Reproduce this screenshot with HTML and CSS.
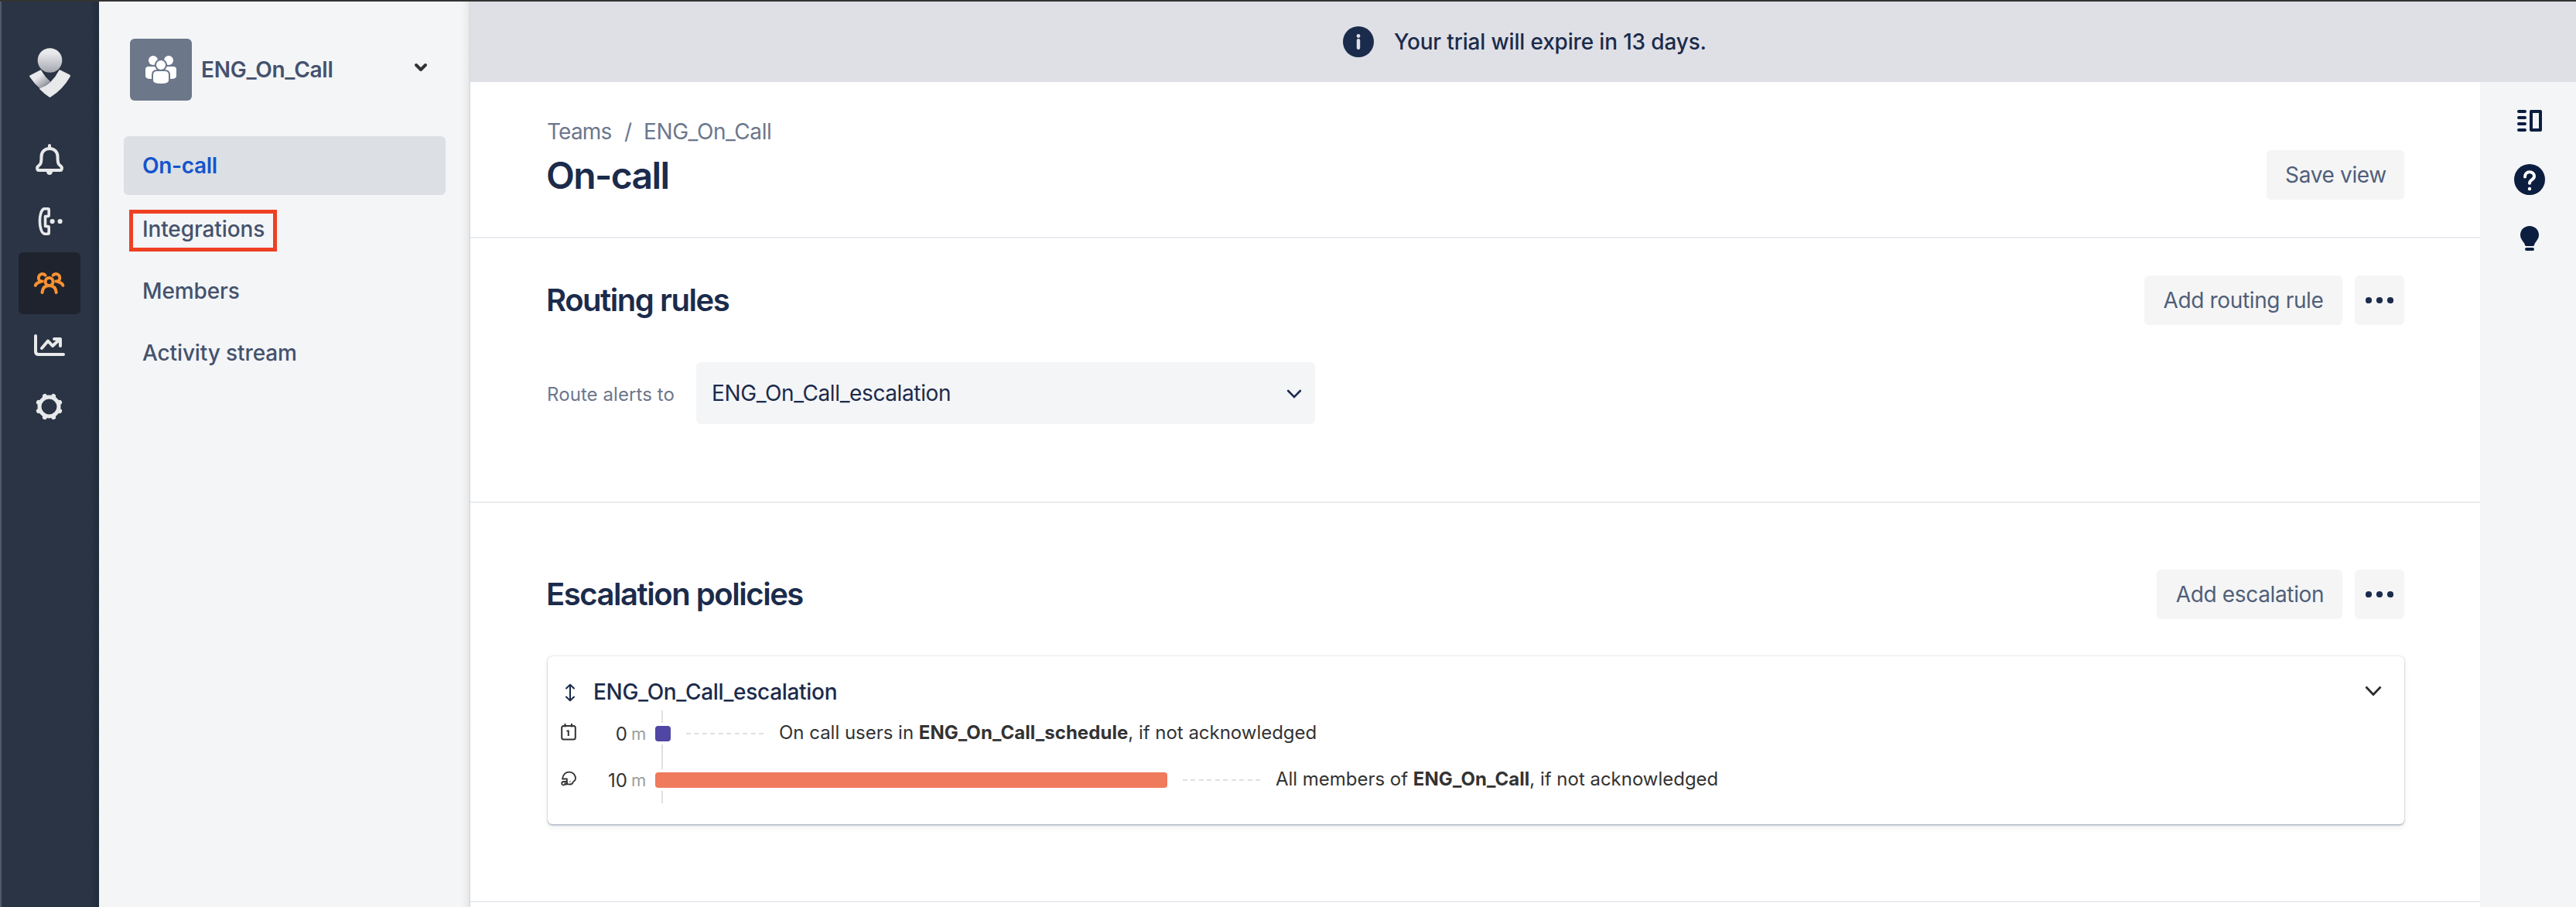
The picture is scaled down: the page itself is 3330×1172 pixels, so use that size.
FILE: index.html
```html
<!DOCTYPE html>
<html lang="en">
<head>
<meta charset="utf-8">
<title>On-call</title>
<link rel="stylesheet" href="styles.css">
</head>
<body>
<div class="app">
  <nav class="rail">
    <a class="rail-logo">
      <svg width="56" height="64" viewBox="0 0 56 64">
        <defs>
          <linearGradient id="head" x1="0" y1="0" x2="0" y2="1"><stop offset="0.2" stop-color="#e8e9eb"/><stop offset="1" stop-color="#a3a7ae"/></linearGradient>
          <linearGradient id="arm" x1="0.2" y1="0.2" x2="0.75" y2="0.85"><stop offset="0.3" stop-color="#e8e9eb"/><stop offset="1" stop-color="#8d929c"/></linearGradient>
        </defs>
        <circle cx="27.500" cy="16" r="15.800" fill="url(#head)"/>
        <path d="M1.600 35.500 14.600 28.700Q16 28.200 16.800 29.600 21 37.500 28.300 43.500L15.500 53.300Q7 46 1.200 37Q.700 36 1.600 35.500Z" fill="url(#arm)"/>
        <path d="M41 28.500 53 34.600Q54.600 35.500 53.700 37 44 54 28.300 63.500 27.500 64 26.700 63.500 20 59 13.700 52.700 30.500 46.500 38.900 29.500 39.700 27.900 41 28.500Z" fill="#e8e9eb"/>
      </svg>
    </a>
    <a class="rail-item">
      <svg width="48" height="48" viewBox="0 0 48 48" fill="none" stroke="#e8e9eb" stroke-width="4" stroke-linecap="round" stroke-linejoin="round">
        <path d="M24 6v3M24 10c-6 0-10.500 4-10.500 10.500C13.500 30 12 31 9 33c-1.500 1.500-1 5 1 5h28c2 0 2.500-3.500 1-5-3-2-4.500-3-4.500-12.500C34.500 14 30 10 24 10Z"/>
        <path d="M20 40h8q-.5 4-4 4t-4-4Z" fill="#e8e9eb" stroke="none"/>
      </svg>
    </a>
    <a class="rail-item">
      <svg width="48" height="48" viewBox="0 0 48 48" fill="none" stroke="#e8e9eb" stroke-width="3.600" stroke-linejoin="round">
        <path d="M17 7.800h5q1.200 0 1.200 1.200v7q0 1.500-1.500 1.500h-3.200v13h3.200q1.500 0 1.500 1.500v7q0 1.200-1.200 1.200h-4.500C9.500 38 9.500 10 17 7.800Z"/>
        <circle cx="27.600" cy="24" r="3.100" fill="#e8e9eb" stroke="none"/><circle cx="37.600" cy="24" r="3.100" fill="#e8e9eb" stroke="none"/>
      </svg>
    </a>
    <a class="rail-item active">
      <svg width="48" height="48" viewBox="0 -4 48 48" fill="none" stroke="#f79232" stroke-width="4" stroke-linecap="round">
        <circle cx="23.600" cy="18" r="5"/>
        <path d="M14.500 32c.5-6 4-9 9.100-9s8.600 3 9.100 9"/>
        <path d="M18.500 9.700a5 5 0 1 0-6 7.800h2.300M12 18.200c-3.500.8-5.300 2-6.200 4.600"/>
        <path d="M28.700 9.700a5 5 0 1 1 6 7.800h-2.300M35.200 18.200c3.500.8 5.300 2 6.200 4.600"/>
      </svg>
    </a>
    <a class="rail-item">
      <svg width="48" height="48" viewBox="0 0 48 48" fill="none" stroke="#e8e9eb" stroke-width="4" stroke-linecap="round" stroke-linejoin="round">
        <path d="M6 12v20q0 4 4 4h32"/>
        <path d="m14 28 8-9.500 6 6.500L37.500 16M30 16h8v9"/>
      </svg>
    </a>
    <a class="rail-item">
      <svg width="48" height="48" viewBox="0 0 48 48" fill="none" stroke="#e8e9eb">
        <circle cx="23.500" cy="23.500" r="12.500" stroke-width="5"/>
        <g stroke-width="6" stroke-linecap="round"><path d="M17.900 9.900l.4.900M29.100 9.900l-.4.900M37.100 17.900l-.9.400M37.100 29.100l-.9-.4M29.100 37.100l-.4-.9M17.900 37.100l.4-.9M9.900 29.100l.9-.4M9.900 17.900l.9.400"/></g>
      </svg>
    </a>
  </nav>

  <aside class="sidebar">
    <div class="team">
      <span class="team-avatar">
        <svg width="44" height="48" viewBox="0 0 44 48" fill="#fff">
          <circle cx="12" cy="12" r="6"/><circle cx="32" cy="12" r="6"/>
          <path d="M6 20h12v16H9q-7 0-7-4v-8q0-4 4-4ZM38 20H26v16h9q7 0 7-4v-8q0-4-4-4Z"/>
          <g stroke="#6c778a" stroke-width="2"><circle cx="22" cy="18" r="7"/><path d="M17 25h10q6 0 6 6v7q0 5-11 5t-11-5v-7q0-6 6-6Z"/></g>
        </svg>
      </span>
      <span class="team-name">ENG_On_Call</span>
      <svg class="team-caret" width="20" height="14" viewBox="0 0 20 14" fill="none" stroke="#333" stroke-width="4" stroke-linecap="round" stroke-linejoin="round"><path d="m4 4 6 6 6-6"/></svg>
    </div>
    <ul class="menu">
      <li class="menu-item selected">On-call</li>
      <li class="menu-item">Integrations<span class="highlight"></span></li>
      <li class="menu-item">Members</li>
      <li class="menu-item">Activity stream</li>
    </ul>
  </aside>

  <div class="content">
    <div class="banner">
      <svg width="40" height="40" viewBox="0 0 40 40"><circle cx="20" cy="20" r="20" fill="#1b2b4b"/><circle cx="20" cy="12.500" r="2.400" fill="#dfe1e6"/><path d="M20 18.300v9.500" stroke="#dfe1e6" stroke-width="4.400" stroke-linecap="round"/></svg>
      <span>Your trial will expire in 13 days.</span>
    </div>
    <div class="columns">
      <main class="page">
        <header class="page-head">
          <div>
            <div class="crumbs"><span class="crumb-root">Teams</span><span class="crumb-sep">/</span><span>ENG_On_Call</span></div>
            <h1>On-call</h1>
          </div>
          <button class="btn save">Save view</button>
        </header>

        <section class="routing">
          <div class="section-head">
            <h2>Routing rules</h2>
            <div class="actions">
              <button class="btn add-rule">Add routing rule</button>
              <button class="btn more"><svg width="36" height="10" viewBox="0 0 36 10" fill="#1b2b4b"><circle cx="4" cy="5" r="4.100"/><circle cx="18" cy="5" r="4.100"/><circle cx="32" cy="5" r="4.100"/></svg></button>
            </div>
          </div>
          <div class="route">
            <label>Route alerts to</label>
            <div class="select">
              <span>ENG_On_Call_escalation</span>
              <svg width="20" height="14" viewBox="0 0 20 14" fill="none" stroke="#1b2b4b" stroke-width="2.600" stroke-linecap="round"><path d="m2.200 4 7.800 8 7.800-8"/></svg>
            </div>
          </div>
        </section>

        <section class="escalation">
          <div class="section-head">
            <h2>Escalation policies</h2>
            <div class="actions">
              <button class="btn add-esc">Add escalation</button>
              <button class="btn more"><svg width="36" height="10" viewBox="0 0 36 10" fill="#1b2b4b"><circle cx="4" cy="5" r="4.100"/><circle cx="18" cy="5" r="4.100"/><circle cx="32" cy="5" r="4.100"/></svg></button>
            </div>
          </div>
          <article class="card">
            <div class="card-head">
              <svg class="drag" width="14" height="24" viewBox="0 0 14 24" fill="none" stroke="#1b2b4b" stroke-width="2" stroke-linecap="round" stroke-linejoin="round"><path d="M7 2v20M2 6.500 7 1.800l5 4.700M2 17.500l5 4.700 5-4.700"/></svg>
              <h3>ENG_On_Call_escalation</h3>
              <svg class="card-caret" width="22" height="16" viewBox="0 0 22 16" fill="none" stroke="#2b2b2b" stroke-width="2.800"><path d="m1.500 2.500 9.500 10 9.500-10"/></svg>
            </div>
            <div class="step">
              <svg class="step-icon" width="20" height="24" viewBox="0 0 20 24" fill="none" stroke="#333" stroke-width="2"><rect x="1.200" y="4" width="17.600" height="17.500" rx="2.500"/><path d="M5.500 1v4.500M14 1v4.500M7.500 10.500h2.300V17"/></svg>
              <span class="step-time">0</span><span class="step-unit">m</span>
              <div class="track track-start"><i class="tick"></i><i class="bar"></i><i class="tick"></i></div>
              <i class="dashes"></i>
              <span class="step-text">On call users in <b>ENG_On_Call_schedule</b>, if not acknowledged</span>
            </div>
            <div class="step">
              <svg class="step-icon" width="20" height="24" viewBox="0 0 20 24" fill="none" stroke="#333" stroke-width="1.800" stroke-linejoin="round"><path d="M2 12.500C2.500 6.500 6.500 3.600 10.500 3.600c6 0 8.500 4.500 8.500 8.200 0 2.700-1.600 3.600-3 4.400-.6 2-1.800 3.300-4 3.300-3.500 0-5.500-.5-7.500.5-1.700 1-3.300.3-3.300-1.500 0-1.800 1-2.500 2.700-2.500h4v-3.500Z"/><path d="M8 16v3M4.500 18.500H8"/><circle cx="12" cy="16" r=".8" fill="#333" stroke="none"/></svg>
              <span class="step-time">10</span><span class="step-unit">m</span>
              <div class="track track-wait"><i class="tick"></i><i class="bar"></i><i class="tick"></i></div>
              <i class="dashes"></i>
              <span class="step-text">All members of <b>ENG_On_Call</b>, if not acknowledged</span>
            </div>
          </article>
        </section>
      </main>

      <aside class="tools">
        <svg width="40" height="40" viewBox="0 0 40 40" fill="none" stroke="#0c1e40" stroke-width="4"><path d="M6 8h8M6 16h8M6 24h8M6 32h8" stroke-linecap="round"/><rect x="22" y="8" width="12" height="24" stroke-linejoin="round"/></svg>
        <svg width="40" height="40" viewBox="0 0 40 40"><circle cx="20" cy="20" r="20" fill="#0c1e40"/><path d="M14 16.500c0-4 2.700-6.300 6-6.300s6 2.300 6 5.600c0 4.700-6 4-6 9" fill="none" stroke="#fff" stroke-width="4" stroke-linecap="round"/><circle cx="20" cy="32" r="2.200" fill="#fff"/></svg>
        <svg width="40" height="40" viewBox="0 0 40 40" fill="#0c1e40"><path d="M20 4c6.700 0 12 5 12 11.500 0 5-3.500 8-5.500 11.500q-.5 3-1.500 3H15q-1 0-1.500-3C11.500 23.500 8 20.500 8 15.500 8 9 13.300 4 20 4Z"/><rect x="14" y="32" width="12" height="4" rx="2"/></svg>
      </aside>
    </div>
  </div>
</div>
</body>
</html>
```
FILE: styles.css
```css
* { box-sizing: border-box; margin: 0; padding: 0; }

body {
  font-family: Inter, "Liberation Sans", sans-serif;
  font-size: 28px;
  color: #1b2b4b;
  background: #fff;
  overflow: hidden;
}

svg { display: block; flex: none; }

.app {
  display: flex;
  height: 1172px;
  border-top: 2px solid #333;
}

/* Global navigation rail */
.rail {
  flex: none;
  width: 128px;
  padding-top: 60px;
  border-left: 2px solid #505b68;
  background: linear-gradient(to right, #2b3444 114px, #222b3a 126px);
}
.rail-logo { display: flex; justify-content: center; height: 104px; }
.rail-item {
  display: flex;
  align-items: center;
  justify-content: center;
  width: 80px;
  height: 80px;
  margin-left: 22px;
  border-radius: 6px;
}
.rail-item.active { background: #1e232e; }

/* Team sidebar */
.sidebar {
  flex: none;
  width: 480px;
  padding: 48px 30px 0 32px;
  border-right: 2px solid #dcdddf;
  background: linear-gradient(to right, #f4f5f7 468px, #e9eaec 478px);
  color: #44526d;
  font-weight: 500;
}
.team { display: flex; align-items: center; height: 80px; padding: 0 22px 0 8px; }
.team-avatar {
  display: flex;
  align-items: center;
  justify-content: center;
  width: 80px;
  height: 80px;
  border-radius: 6px;
  background: #6c778a;
}
.team-name { flex: 1; margin-left: 12px; line-height: 40px; font-weight: 600; letter-spacing: -0.25px; }
.team-caret { margin-top: -6px; }
.menu { margin-top: 46px; list-style: none; letter-spacing: -0.12px; }
.menu-item { position: relative; height: 80px; padding-left: 24px; line-height: 80px; }
.menu-item.selected {
  height: 76px;
  margin-bottom: 4px;
  line-height: 76px;
  border-radius: 6px;
  background: #dcdfe4;
  color: #1554cc;
  letter-spacing: -0.3px;
  font-weight: 600;
}
.highlight {
  position: absolute;
  left: 7px;
  top: 15px;
  width: 191px;
  height: 54px;
  border: 5px solid #ee4023;
}

/* Content area */
.content { flex: 1; display: flex; flex-direction: column; min-width: 0; }
.banner {
  flex: none;
  display: flex;
  align-items: center;
  justify-content: center;
  gap: 26px;
  height: 104px;
  padding-left: 4px;
  background: #dfe0e5;
  font-weight: 500;
  letter-spacing: -0.17px;
}
.columns { flex: 1; display: flex; min-height: 0; }
.page { flex: 1; min-width: 0; overflow: hidden; }

.page-head,
.routing,
.escalation { padding: 0 98px 0 100px; border-bottom: 2px solid #ebecf0; }

.page-head { display: flex; justify-content: space-between; height: 202px; padding-top: 44px; }
.crumbs {
  display: flex;
  line-height: 40px;
  letter-spacing: -0.4px;
  color: #6c778c;
}
.crumb-root { width: 99px; letter-spacing: -0.8px; text-indent: -1px; }
.crumb-sep { width: 25px; }
h1 { margin-top: 9px; font-size: 48px; line-height: 56px; font-weight: 600; letter-spacing: -1.6px; text-indent: -2px; }
h2 { font-size: 40px; line-height: 64px; font-weight: 600; letter-spacing: -1.45px; text-indent: -2px; }

.btn {
  height: 64px;
  border: 0;
  border-radius: 6px;
  background: #f5f5f6;
  color: #505f79;
  font: 400 28px/64px Inter, "Liberation Sans", sans-serif;
  letter-spacing: -0.35px;
}
.save { width: 178px; margin-top: 44px; padding-left: 1px; }
.add-rule { width: 256px; }
.add-esc { width: 240px; padding-left: 1px; }
.more { display: flex; align-items: center; justify-content: center; width: 64px; }

.section-head { display: flex; justify-content: space-between; height: 64px; }
.actions { display: flex; gap: 16px; }

.routing { height: 342px; padding-top: 48px; }
.route { display: flex; align-items: center; height: 80px; margin-top: 48px; }
.route label { width: 192px; font-size: 24px; color: #6c778c; padding-top: 3px; text-indent: -1px; letter-spacing: 0.08px; }
.select {
  display: flex;
  align-items: center;
  justify-content: space-between;
  width: 800px;
  height: 80px;
  padding: 0 17px 0 20px;
  border-radius: 6px;
  background: #f4f5f7;
  letter-spacing: -0.38px;
}

.escalation { height: 516px; padding-top: 86px; }
.card {
  height: 217px;
  margin-top: 48px;
  padding: 23px 29px 0 17px;
  border-radius: 6px;
  box-shadow: 0 2px 2px rgba(9, 30, 66, 0.2), 0 0 2px rgba(9, 30, 66, 0.28), 0 4px 10px rgba(9, 30, 66, 0.06);
}
.card-head { display: flex; align-items: center; height: 47px; }
.drag { margin-left: 5px; }
.card h3 { flex: 1; margin-left: 23px; font-size: 28px; line-height: 47px; font-weight: 500; letter-spacing: -0.3px; }
.card-caret { margin-top: -4px; }

/* Escalation timeline */
.step { display: flex; align-items: center; height: 60px; font-size: 24px; color: #333; }
.step-icon { margin-top: -4px; }
.step-time { width: 66px; text-align: right; }
.step-unit { width: 36px; padding-left: 5px; color: #9d9d9d; font-size: 22px; }
.track { display: flex; flex-direction: column; gap: 4px; margin-right: 20px; }
.tick { width: 2px; height: 16px; margin-left: 8px; background: #dfe0e6; }
.bar { height: 20px; border-radius: 4px; }
.track-start { width: 20px; }
.track-start .bar { background: #5046a4; }
.track-wait { width: 662px; }
.track-wait .bar { background: #f07a5c; }
.dashes {
  width: 100px;
  height: 2px;
  margin-right: 20px;
  background: repeating-linear-gradient(to right, #dfe0e6 0 6px, transparent 6px 10.44px);
}
.step-text { white-space: pre; line-height: 28px; margin-top: -2px; letter-spacing: -0.02px; }
.step-text b { font-weight: 700; letter-spacing: 0.05px; }

/* Right-hand tools */
.tools {
  flex: none;
  display: flex;
  flex-direction: column;
  align-items: center;
  gap: 36px;
  width: 124px;
  padding: 30px 0 0 4px;
  background: #f4f5f7;
}
```
